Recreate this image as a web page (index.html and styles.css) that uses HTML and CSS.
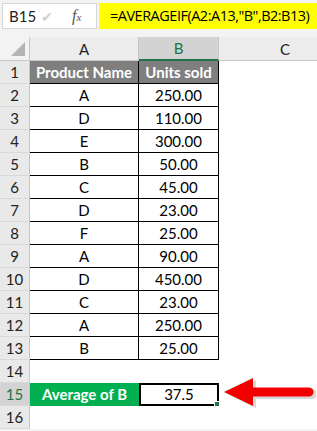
FILE: index.html
```html
<!DOCTYPE html>
<html lang="en">
<head>
    <meta charset="UTF-8">
    <title>AVERAGEIF example</title>
    <link rel="stylesheet" href="styles.css">
</head>
<body>
    <div class="formula-bar">
        <div class="name-box">
            <span class="cell-ref">B15</span>
            <span class="check">&#10004;</span>
            <span class="fx">f<small>x</small></span>
        </div>
        <div class="formula">=AVERAGEIF(A2:A13,"B",B2:B13)</div>
    </div>

    <div class="sheet">
        <div class="corner"><span class="tri"></span></div>
        <div class="col-head">A</div>
        <div class="col-head active">B</div>
        <div class="col-head last">C</div>

        <div class="row-head">1</div>
        <div class="cell title">Product Name</div>
        <div class="cell title b">Units sold</div>
        <div class="empty"></div>

        <div class="row-head">2</div><div class="cell">A</div><div class="cell b">250.00</div><div class="empty"></div>
        <div class="row-head">3</div><div class="cell">D</div><div class="cell b">110.00</div><div class="empty"></div>
        <div class="row-head">4</div><div class="cell">E</div><div class="cell b">300.00</div><div class="empty"></div>
        <div class="row-head">5</div><div class="cell">B</div><div class="cell b">50.00</div><div class="empty"></div>
        <div class="row-head">6</div><div class="cell">C</div><div class="cell b">45.00</div><div class="empty"></div>
        <div class="row-head">7</div><div class="cell">D</div><div class="cell b">23.00</div><div class="empty"></div>
        <div class="row-head">8</div><div class="cell">F</div><div class="cell b">25.00</div><div class="empty"></div>
        <div class="row-head">9</div><div class="cell">A</div><div class="cell b">90.00</div><div class="empty"></div>
        <div class="row-head">10</div><div class="cell">D</div><div class="cell b">450.00</div><div class="empty"></div>
        <div class="row-head">11</div><div class="cell">C</div><div class="cell b">23.00</div><div class="empty"></div>
        <div class="row-head">12</div><div class="cell">A</div><div class="cell b">250.00</div><div class="empty"></div>
        <div class="row-head">13</div><div class="cell">B</div><div class="cell b">25.00</div><div class="empty"></div>

        <div class="row-head">14</div><div class="empty"></div><div class="empty"></div><div class="empty"></div>

        <div class="row-head active">15</div>
        <div class="avg-label">Average of B</div>
        <div class="avg-value">37.5<span class="handle"></span></div>
        <div class="empty arrow-cell">
            <svg class="arrow" width="92" height="32" viewBox="0 0 92 32">
                <path d="M2 14 L30 0 L30 9 L86 9 A5 5 0 0 1 86 19 L30 19 L30 28 Z" fill="#b0b0b0" opacity="0.5" transform="translate(2 2)"/>
                <path d="M0 14 L29 0 L29 9.5 L85 9.5 A4.5 4.5 0 0 1 85 18.5 L29 18.5 L29 28 Z" fill="#f20000"/>
            </svg>
        </div>

        <div class="row-head">16</div><div class="empty"></div><div class="empty"></div><div class="empty"></div>
    </div>
</body>
</html>
```

FILE: styles.css
```css
body {
    margin: 0;
    width: 317px;
    height: 431px;
    overflow: hidden;
    background: #f3f3f3;
    font-family: Lato, "Liberation Sans", sans-serif;
    color: #000;
}

.formula-bar {
    display: flex;
    gap: 2px;
    padding: 3px 0 8px 2px;
}

.name-box {
    display: flex;
    align-items: center;
    width: 95px;
    height: 26px;
    box-sizing: border-box;
    background: white;
    border: 1px solid #d6d6d6;
    padding-left: 6px;
}

.cell-ref {
    font-size: 15px;
    color: #222;
    width: 30px;
}

.check {
    color: #cfcfcf;
    font-size: 14px;
    margin-left: 2px;
}

.fx {
    font-family: "Liberation Serif", serif;
    font-style: italic;
    font-size: 16px;
    color: #555;
    margin-left: 19px;
}

.fx small {
    font-size: 11px;
}

.formula {
    flex: 1;
    height: 26px;
    box-sizing: border-box;
    background: #ffff00;
    padding-left: 11px;
    font-family: "Open Sans", sans-serif;
    font-size: 14.5px;
    line-height: 25px;
    white-space: nowrap;
    letter-spacing: -0.5px;
}

.sheet {
    display: grid;
    grid-template-columns: 30px 109px 80px 98px;
    grid-template-rows: 24px repeat(16, 23px);
}

.corner {
    background: #f3f3f3;
    border-right: 1px solid #c6c6c6;
    border-bottom: 1px solid #c6c6c6;
    position: relative;
}

.tri {
    position: absolute;
    right: 4px;
    bottom: 4px;
    width: 0;
    height: 0;
    border-left: 14px solid transparent;
    border-bottom: 14px solid #b4b4b4;
}

.col-head {
    background: #ececec;
    border-right: 1px solid #c6c6c6;
    border-bottom: 1px solid #c6c6c6;
    text-align: center;
    font-size: 15px;
    line-height: 24px;
    color: #222;
}

.col-head.active {
    background: #d3d3d3;
    color: #217346;
    border-bottom: 2px solid #217346;
    line-height: 23px;
}

.col-head.last {
    border-right: none;
    padding-left: 34px;
}

.row-head {
    background: #e9e9e9;
    border-right: 1px solid #c6c6c6;
    border-bottom: 1px solid #d8d8d8;
    text-align: center;
    font-size: 15px;
    line-height: 23px;
    color: #222;
}

.row-head.active {
    background: #d3d3d3;
    color: #217346;
}

.cell {
    background: white;
    border-right: 1px solid #000;
    border-bottom: 1px solid #000;
    text-align: center;
    font-size: 15px;
    line-height: 22px;
}

.cell.title {
    background: #7f7f7f;
    color: white;
    font-weight: bold;
}

.empty {
    background: white;
}

.avg-label {
    background: #00b050;
    color: white;
    font-weight: bold;
    text-align: center;
    font-size: 15px;
    line-height: 23px;
}

.avg-value {
    position: relative;
    background: white;
    border: 2px solid #000;
    text-align: center;
    font-size: 15px;
    line-height: 19px;
}

.handle {
    position: absolute;
    right: -3px;
    bottom: -3px;
    width: 4px;
    height: 4px;
    background: #217346;
    border: 1px solid white;
}

.arrow-cell {
    position: relative;
}

.arrow {
    position: absolute;
    left: 5px;
    top: -5px;
}
```
